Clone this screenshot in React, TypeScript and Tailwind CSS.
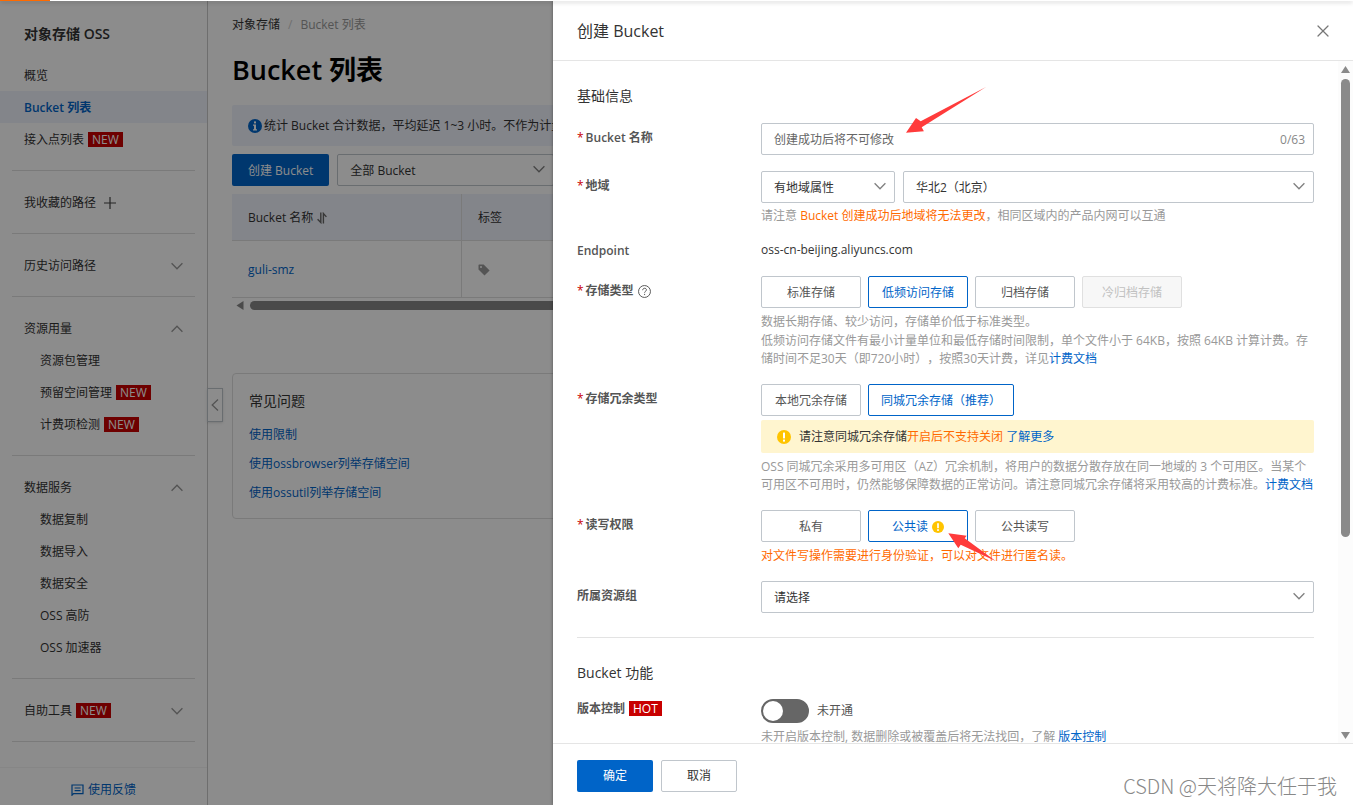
import { useState, type ReactNode } from "react";
import { X } from "lucide-react";
import clsx from "clsx";

/* ─── Data ──────────────────────────────────────────────────────────────── */
interface NavItem {
  label: string;
  isNew?: boolean;
}

interface NavSection extends NavItem {
  open: boolean;
  items: NavItem[];
}

const TOP_NAV: NavItem[] = [
  { label: "概览" },
  { label: "Bucket 列表" },
  { label: "接入点列表", isNew: true },
];

const NAV_SECTIONS: NavSection[] = [
  { label: "历史访问路径", open: false, items: [] },
  {
    label: "资源用量",
    open: true,
    items: [
      { label: "资源包管理" },
      { label: "预留空间管理", isNew: true },
      { label: "计费项检测", isNew: true },
    ],
  },
  {
    label: "数据服务",
    open: true,
    items: [
      { label: "数据复制" },
      { label: "数据导入" },
      { label: "数据安全" },
      { label: "OSS 高防" },
      { label: "OSS 加速器" },
    ],
  },
  { label: "自助工具", isNew: true, open: false, items: [] },
];

const FAQ = ["使用限制", "使用ossbrowser列举存储空间", "使用ossutil列举存储空间"];

/* ─── Icons ─────────────────────────────────────────────────────────────── */
function Chevron({ up = false, className }: { up?: boolean; className?: string }) {
  return (
    <svg viewBox="0 0 12 8" className={clsx("h-2 w-3", className)} fill="none" stroke="currentColor" strokeWidth="1.3">
      <path d={up ? "M0.6 6.8 6 1.2l5.4 5.6" : "M0.6 1.2 6 6.8l5.4-5.6"} />
    </svg>
  );
}

function WarnIcon({ className }: { className?: string }) {
  return (
    <svg viewBox="0 0 14 14" className={className}>
      <circle cx="7" cy="7" r="7" fill="#ffc400" />
      <rect x="6" y="2.6" width="2" height="5.8" fill="#fff" />
      <rect x="6" y="9.6" width="2" height="2" fill="#fff" />
    </svg>
  );
}

function InfoIcon() {
  return (
    <svg viewBox="0 0 14 14" className="size-3.5 shrink-0">
      <circle cx="7" cy="7" r="7" fill="#0064c8" />
      <rect x="6" y="2.4" width="2" height="2" fill="#fff" />
      <path d="M5 5.6h3v4.6h1v1.2H5v-1.2h1V6.8H5z" fill="#fff" />
    </svg>
  );
}

function HelpIcon() {
  return (
    <svg viewBox="0 0 12 12" className="size-[13px]" fill="none" stroke="#555" strokeWidth="0.9">
      <circle cx="6" cy="6" r="5.5" />
      <path d="M4.3 4.8c0-2.4 3.5-2.3 3.5-.3 0 1.3-1.7 1.3-1.7 2.6M6.1 8.2v1.1" />
    </svg>
  );
}

function SortIcon() {
  return (
    <svg viewBox="0 0 10 12" className="h-3 w-2.5" fill="none" stroke="#666" strokeWidth="1.4">
      <path d="M3.8 0.5v10L0.6 7.2" />
      <path d="M6.4 11.5v-10l3 3.4" />
    </svg>
  );
}

function TagIcon() {
  return (
    <svg viewBox="0 0 12 12" className="size-3">
      <path d="M1 0.5h4.6l6 6-5.1 5-6-6V1z" fill="#999" />
      <circle cx="3" cy="3" r="1" fill="#fff" />
    </svg>
  );
}

function FeedbackIcon() {
  return (
    <svg viewBox="0 0 13 12" className="h-3 w-[13px]" fill="none" stroke="currentColor" strokeWidth="1.2">
      <path d="M1 11.2V1h11v8.6H2.6z" />
      <path d="M3.6 4h6M3.6 6.6h6" />
    </svg>
  );
}

/* ─── Shared bits ───────────────────────────────────────────────────────── */
function Badge({ children }: { children: ReactNode }) {
  return <span className="bg-[#c80000] px-1 text-xs leading-[15px] font-normal text-white">{children}</span>;
}

function Link({ children, className }: { children: ReactNode; className?: string }) {
  return (
    <a href="#" className={clsx("text-[#0064c8]", className)}>
      {children}
    </a>
  );
}

function Select({ id, label, value, className }: { id: string; label: string; value: string; className?: string }) {
  return (
    <div className={clsx("relative", className)}>
      <select
        id={id}
        aria-label={label}
        className="h-8 w-full appearance-none rounded-xs border border-[#c0c6cc] bg-white pt-px pr-8 pl-3 text-xs text-[#333]"
      >
        <option>{value}</option>
      </select>
      <Chevron className="pointer-events-none absolute top-[11px] right-[9px] text-[#808080]" />
    </div>
  );
}

/* ─── Sidebar ───────────────────────────────────────────────────────────── */
function Sidebar() {
  return (
    <aside className="relative flex w-52 shrink-0 flex-col border-r border-[#c8c8c8] text-xs text-[#333]">
      <h2 className="h-[58px] px-6 pt-2 text-sm leading-[50px] font-semibold">对象存储 OSS</h2>
      <nav className="flex-1">
        {TOP_NAV.map((item) => (
          <a
            key={item.label}
            href="#"
            className={clsx(
              "flex h-8 items-center gap-1 px-6 pt-px",
              item.label === "Bucket 列表" && "bg-[#eff2fb] font-semibold text-[#0064c8]",
            )}
          >
            {item.label}
            {item.isNew && <Badge>NEW</Badge>}
          </a>
        ))}
        <div className="mx-3 mt-[15px] border-t border-[#dedede] py-[15px]">
          <div className="flex h-8 items-center gap-2 px-3 pt-px">
            我收藏的路径
            <svg viewBox="0 0 12 12" className="size-3" stroke="#444" strokeWidth="1.2">
              <path d="M6 0v12M0 6h12" />
            </svg>
          </div>
        </div>
        {NAV_SECTIONS.map((section) => (
          <div key={section.label} className="mx-3 border-t border-[#dedede] py-[15px]">
            <button className="flex h-8 w-full items-center gap-1 px-3 pt-px">
              {section.label}
              {section.isNew && <Badge>NEW</Badge>}
              <Chevron up={section.open} className="ml-auto text-[#999]" />
            </button>
            {section.items.map((item) => (
              <a key={item.label} href="#" className="flex h-8 items-center gap-1 pt-px pl-7">
                {item.label}
                {item.isNew && <Badge>NEW</Badge>}
              </a>
            ))}
          </div>
        ))}
        <div className="mx-3 border-t border-[#dedede]" />
      </nav>
      <button className="flex h-[38px] shrink-0 items-center justify-center gap-1 border-t border-[#f4f4f4] pt-1.5 text-[#0064c8]">
        <FeedbackIcon />
        使用反馈
      </button>
      <button
        aria-label="收起"
        className="absolute top-[387px] left-full flex h-[34px] w-4 items-center justify-center border border-[#c0c6cc] bg-white text-[#999] shadow-sm"
      >
        <svg viewBox="0 0 8 12" className="h-3 w-2" fill="none" stroke="currentColor" strokeWidth="1.3">
          <path d="M7 .6 1.2 6 7 11.4" />
        </svg>
      </button>
    </aside>
  );
}

/* ─── Bucket list page ──────────────────────────────────────────────────── */
function BucketList() {
  return (
    <main className="min-w-0 flex-1 pt-[15px] pl-6 text-xs text-[#333]">
      <div className="flex h-[18px] items-center gap-2">
        <a href="#">对象存储</a>
        <span className="text-[#ccc]">/</span>
        <span className="text-[#999]">Bucket 列表</span>
      </div>
      <h1 className="mt-4 text-[27px] leading-10 font-semibold text-black">Bucket 列表</h1>
      <div className="mt-[15px] flex h-[41px] items-center gap-0.5 rounded-xs bg-[#eff2fb] px-4 whitespace-nowrap">
        <InfoIcon />
        统计 Bucket 合计数据，平均延迟 1~3 小时。不作为计量数据，请以账单为准。
      </div>
      <div className="mt-2 flex gap-2">
        <button className="h-8 rounded-xs bg-[#0064c8] px-4 pt-px text-white">创建 Bucket</button>
        <Select id="filter" label="筛选" value="全部 Bucket" className="w-[217px]" />
      </div>
      <table className="mt-2 w-full table-fixed border-separate border-spacing-0 text-left">
        <thead>
          <tr className="h-[47px] bg-[#eff2fb]">
            <th className="w-[230px] border-r border-b border-[#dedede] px-4 pt-0.5 font-normal">
              <span className="flex items-center gap-1">
                Bucket 名称
                <SortIcon />
              </span>
            </th>
            <th className="border-b border-[#dedede] px-4 pt-0.5 font-normal">标签</th>
          </tr>
        </thead>
        <tbody>
          <tr className="h-[57px]">
            <td className="border-r border-b border-[#dedede] px-4 pt-0.5">
              <Link>guli-smz</Link>
            </td>
            <td className="border-b border-[#dedede] px-4 pt-0.5">
              <TagIcon />
            </td>
          </tr>
        </tbody>
      </table>
      <div className="flex h-[15px] items-center gap-1.5 pl-1">
        <svg viewBox="0 0 8 9" className="h-[9px] w-2">
          <path d="M7.5 0v9L0.5 4.5z" fill="#888" />
        </svg>
        <div className="h-[9px] flex-1 rounded-full bg-[#888]" />
      </div>
      <section className="mt-[60px] h-[146px] rounded-sm border border-[#dedede] px-4 pt-4">
        <h3 className="text-sm leading-[22px]">常见问题</h3>
        <ul className="mt-2">
          {FAQ.map((q) => (
            <li key={q} className="h-[29px] leading-[29px]">
              <Link>{q}</Link>
            </li>
          ))}
        </ul>
      </section>
    </main>
  );
}

/* ─── Create drawer ─────────────────────────────────────────────────────── */
interface FieldProps {
  label: ReactNode;
  htmlFor?: string;
  required?: boolean;
  short?: boolean;
  children: ReactNode;
}

function Field({ label, htmlFor, required, short, children }: FieldProps) {
  return (
    <div className="mb-4 flex">
      <label
        htmlFor={htmlFor}
        className={clsx(
          "flex w-46 shrink-0 items-center font-semibold text-[#555]",
          short ? "h-[19px]" : "h-[30px]",
        )}
      >
        {required && <span className="mr-0.5 font-normal text-[#c80000]">*</span>}
        <span className="flex items-center gap-1">{label}</span>
      </label>
      <div className="relative min-w-0 flex-1">{children}</div>
    </div>
  );
}

interface Option {
  label: string;
  disabled?: boolean;
  warn?: boolean;
}

function RadioButtons({ name, options, initial }: { name: string; options: Option[]; initial: string }) {
  const [selected, setSelected] = useState(initial);

  return (
    <div role="radiogroup" aria-label={name} className="flex gap-[7px]">
      {options.map((o) => (
        <label
          key={o.label}
          className={clsx(
            "relative flex h-8 min-w-[100px] items-center justify-center gap-1 rounded-xs border px-3 pt-px",
            o.disabled && "border-[#e0e0e0] bg-[#f7f7f7] text-[#c1c1c1]",
            !o.disabled && selected === o.label && "border-[#0064c8] text-[#0064c8]",
            !o.disabled && selected !== o.label && "border-[#c0c6cc] text-[#555]",
          )}
        >
          <input
            type="radio"
            name={name}
            className="sr-only"
            disabled={o.disabled}
            checked={selected === o.label}
            onChange={() => setSelected(o.label)}
          />
          {o.label}
          {o.warn && <WarnIcon className="size-3" />}
        </label>
      ))}
    </div>
  );
}

function ScrollRail() {
  return (
    <div className="flex w-[15px] shrink-0 flex-col items-center bg-[#fcfcfc] pt-[5px] pb-1">
      <svg viewBox="0 0 9 7" className="h-[7px] w-[9px]">
        <path d="M4.5 0 9 7H0z" fill="#8a8a8a" />
      </svg>
      <div className="mt-1.5 h-[68%] w-[9px] rounded-full bg-[#8a8a8a]" />
      <svg viewBox="0 0 9 7" className="mt-auto h-[7px] w-[9px]">
        <path d="M4.5 7 9 0H0z" fill="#8a8a8a" />
      </svg>
    </div>
  );
}

function CreateDrawer() {
  return (
    <div
      role="dialog"
      aria-label="创建 Bucket"
      className="absolute inset-y-0 right-0 z-20 flex w-[800px] max-w-full flex-col bg-white pt-px text-xs text-[#333] shadow-[0_0_3px_rgba(0,0,0,0.4)]"
    >
      <header className="flex h-15 shrink-0 items-center justify-between border-b border-[#e5e5e5] px-6">
        <h2 className="text-base">创建 Bucket</h2>
        <button aria-label="关闭" className="-mr-1 text-[#777]">
          <X className="size-5" strokeWidth={1.5} />
        </button>
      </header>

      <div className="flex min-h-0 flex-1 overflow-hidden">
        <div className="min-w-0 flex-1 px-6 pt-6">
          <h3 className="mb-4 text-sm leading-[22px]">基础信息</h3>

          <Field label="Bucket 名称" htmlFor="name" required>
            <div className="flex h-8 items-center rounded-xs border border-[#c0c6cc] pt-px pr-2 pl-3">
              <input
                id="name"
                placeholder="创建成功后将不可修改"
                maxLength={63}
                className="min-w-0 flex-1 outline-none placeholder:text-[#666]"
              />
              <span className="text-[#888]">0/63</span>
            </div>
            <svg viewBox="0 0 82 48" className="absolute -top-9 left-[144px] z-10 h-12 w-[82px]" fill="#ff3b3b">
              <path d="M1 45.7 11 31l4.7 3.3L81 0 16.700 40.300l2.200 4z" />
            </svg>
          </Field>

          <Field label="地域" htmlFor="region" required>
            <div className="flex gap-2">
              <Select id="region-type" label="地域属性" value="有地域属性" className="w-[134px]" />
              <Select id="region" label="地域" value="华北2（北京）" className="flex-1" />
            </div>
            <p className="mt-1 leading-[18px] text-[#999]">
              请注意 <span className="text-[#ff6a00]">Bucket 创建成功后地域将无法更改</span>，相同区域内的产品内网可以互通
            </p>
          </Field>

          <Field label="Endpoint" short>
            <p className="leading-[18px]">oss-cn-beijing.aliyuncs.com</p>
          </Field>

          <Field
            required
            label={
              <>
                存储类型
                <HelpIcon />
              </>
            }
          >
            <RadioButtons
              name="存储类型"
              initial="低频访问存储"
              options={[
                { label: "标准存储" },
                { label: "低频访问存储" },
                { label: "归档存储" },
                { label: "冷归档存储", disabled: true },
              ]}
            />
            <div className="mt-1 text-[#999]">
              <p className="leading-5">数据长期存储、较少访问，存储单价低于标准类型。</p>
              <p className="leading-[18px]">
                低频访问存储文件有最小计量单位和最低存储时间限制，单个文件小于 64KB，按照 64KB
                计算计费。存储时间不足30天（即720小时），按照30天计费，详见<Link>计费文档</Link>
              </p>
            </div>
          </Field>

          <Field label="存储冗余类型" required>
            <RadioButtons
              name="存储冗余类型"
              initial="同城冗余存储（推荐）"
              options={[{ label: "本地冗余存储" }, { label: "同城冗余存储（推荐）" }]}
            />
            <div className="mt-1 flex h-[33px] items-center gap-2 rounded-xs bg-[#fff5cf] px-4">
              <WarnIcon className="size-3.5" />
              <p>
                请注意同城冗余存储<span className="text-[#ff6a00]">开启后不支持关闭</span> <Link>了解更多</Link>
              </p>
            </div>
            <p className="mt-[5px] leading-[18px] text-[#999]">
              OSS 同城冗余采用多可用区（AZ）冗余机制，将用户的数据分散存放在同一地域的 3
              个可用区。当某个可用区不可用时，仍然能够保障数据的正常访问。请注意同城冗余存储将采用较高的计费标准。
              <Link>计费文档</Link>
            </p>
          </Field>

          <Field label="读写权限" required>
            <RadioButtons
              name="读写权限"
              initial="公共读"
              options={[{ label: "私有" }, { label: "公共读", warn: true }, { label: "公共读写" }]}
            />
            <p className="mt-1 leading-[19px] text-[#ff6a00]">对文件写操作需要进行身份验证，可以对文件进行匿名读。</p>
            <svg viewBox="0 0 50 30" className="absolute top-[23px] left-[187px] z-10 h-[30px] w-[50px]" fill="#ff3b3b">
              <path d="M.3.3 18.700 2.700l-2 2.600L48 28.300 12.700 11.700l-2.400 3.600z" />
            </svg>
          </Field>

          <Field label="所属资源组" htmlFor="group">
            <Select id="group" label="所属资源组" value="请选择" />
          </Field>

          <section className="mt-6 border-t border-[#e3e3e3] pt-6">
            <h3 className="mb-[15px] text-sm leading-[22px]">Bucket 功能</h3>
            <Field
              htmlFor="versioning"
              short
              label={
                <>
                  版本控制
                  <Badge>HOT</Badge>
                </>
              }
            >
              <div className="flex items-center gap-2 text-[#555]">
                <input
                  id="versioning"
                  type="checkbox"
                  role="switch"
                  className="h-6 w-12 appearance-none rounded-full border-2 border-[#666] bg-[#666] before:block before:size-5 before:rounded-full before:bg-white"
                />
                未开通
              </div>
              <p className="mt-1 leading-[19px] text-[#999]">
                未开启版本控制, 数据删除或被覆盖后将无法找回，了解 <Link>版本控制</Link>
              </p>
            </Field>
          </section>
        </div>
        <ScrollRail />
      </div>

      <footer className="flex h-[62px] shrink-0 items-center justify-between border-t border-[#e5e5e5] pt-0.5 pr-4 pl-6">
        <div className="flex gap-2">
          <button className="h-8 w-19 rounded-xs bg-[#0064c8] pt-px text-white">确定</button>
          <button className="h-8 w-19 rounded-xs border border-[#c0c6cc] pt-px">取消</button>
        </div>
        <span className="pt-5 font-['Noto_Sans_CJK_SC',sans-serif] text-xl leading-5 font-light text-[#888]">
          CSDN @天将降大任于我
        </span>
      </footer>
    </div>
  );
}

export default function App() {
  return (
    <div className="relative flex h-screen flex-col overflow-hidden bg-white font-['Open_Sans','Noto_Sans_CJK_SC',sans-serif] [text-spacing-trim:space-all]">
      <div className="relative z-30 h-px shrink-0 bg-white shadow-[0_1px_4px_rgba(0,0,0,0.4)]">
        <div className="h-px w-[50px] bg-[#ff6a00]" />
      </div>
      <div className="flex min-h-0 flex-1">
        <Sidebar />
        <BucketList />
      </div>
      <div className="absolute inset-0 z-10 bg-black/45" />
      <CreateDrawer />
    </div>
  );
}
